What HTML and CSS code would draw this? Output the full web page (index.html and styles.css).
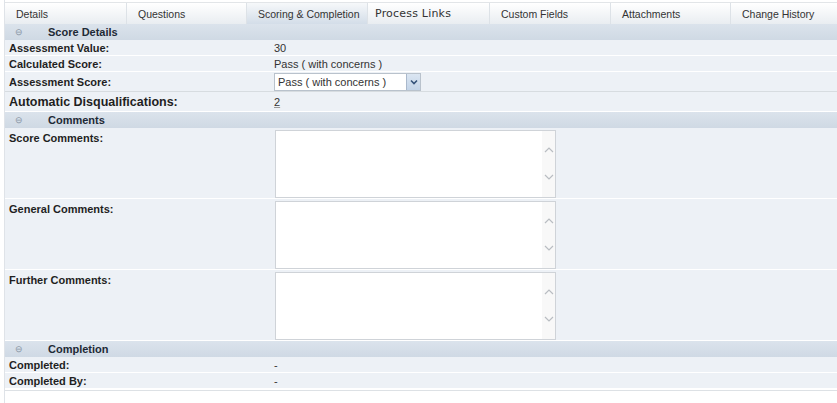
FILE: index.html
```html
<!DOCTYPE html>
<html>
<head>
<meta charset="utf-8">
<link rel="stylesheet" href="styles.css">
</head>
<body>
<div class="page">
  <div class="tabs">
    <div class="tab">Details</div>
    <div class="tab">Questions</div>
    <div class="tab active">Scoring &amp; Completion</div>
    <div class="tab big">Process Links</div>
    <div class="tab">Custom Fields</div>
    <div class="tab">Attachments</div>
    <div class="tab last">Change History</div>
  </div>

  <div class="section-head"><span class="toggle">&#8854;</span><span class="title">Score Details</span></div>
  <div class="row h16"><div class="label">Assessment Value:</div><div class="value">30</div></div>
  <div class="row h16"><div class="label">Calculated Score:</div><div class="value">Pass ( with concerns )</div></div>
  <div class="row h20 sep-gray"><div class="label">Assessment Score:</div>
    <div class="value"><div class="select"><span class="select-text">Pass ( with concerns )</span><span class="select-btn"><svg width="8" height="6" viewBox="0 0 8 6"><path d="M1 1.5 L4 4.5 L7 1.5" fill="none" stroke="#34527a" stroke-width="1.6"/></svg></span></div></div>
  </div>
  <div class="row h20"><div class="label wide">Automatic Disqualifications:</div><div class="value"><span class="link">2</span></div></div>

  <div class="section-head"><span class="toggle">&#8854;</span><span class="title">Comments</span></div>
  <div class="row ta-row"><div class="label top">Score Comments:</div><div class="value"><div class="textarea"><div class="ta-field"></div><div class="ta-scroll"><svg width="10" height="6" viewBox="0 0 10 6"><path d="M1 5 L5 1 L9 5" fill="none" stroke="#b9bdc2" stroke-width="1.2"/></svg><svg width="10" height="6" viewBox="0 0 10 6"><path d="M1 1 L5 5 L9 1" fill="none" stroke="#b9bdc2" stroke-width="1.2"/></svg></div></div></div></div>
  <div class="row ta-row"><div class="label top">General Comments:</div><div class="value"><div class="textarea"><div class="ta-field"></div><div class="ta-scroll"><svg width="10" height="6" viewBox="0 0 10 6"><path d="M1 5 L5 1 L9 5" fill="none" stroke="#b9bdc2" stroke-width="1.2"/></svg><svg width="10" height="6" viewBox="0 0 10 6"><path d="M1 1 L5 5 L9 1" fill="none" stroke="#b9bdc2" stroke-width="1.2"/></svg></div></div></div></div>
  <div class="row ta-row"><div class="label top">Further Comments:</div><div class="value"><div class="textarea"><div class="ta-field"></div><div class="ta-scroll"><svg width="10" height="6" viewBox="0 0 10 6"><path d="M1 5 L5 1 L9 5" fill="none" stroke="#b9bdc2" stroke-width="1.2"/></svg><svg width="10" height="6" viewBox="0 0 10 6"><path d="M1 1 L5 5 L9 1" fill="none" stroke="#b9bdc2" stroke-width="1.2"/></svg></div></div></div></div>

  <div class="section-head"><span class="toggle">&#8854;</span><span class="title">Completion</span></div>
  <div class="row h16"><div class="label">Completed:</div><div class="value">-</div></div>
  <div class="row h16"><div class="label">Completed By:</div><div class="value">-</div></div>
  <div class="row tail"></div>
</div>
</body>
</html>
```

FILE: styles.css
```css
html, body {
  margin: 0;
  padding: 0;
  background: #ffffff;
  height: 403px;
  overflow: hidden;
}
body {
  font-family: "Liberation Sans", Arial, sans-serif;
  font-size: 11px;
  color: #222;
}
.page {
  margin-left: 4px;
  padding-top: 2px;
  border-left: 1px solid #dfe3e8;
}
.tabs {
  display: grid;
  grid-template-columns: 122px 120px 121px 122px 121px 120px 1fr;
  height: 21px;
  border-top: 1px solid #e2e5e8;
  background: linear-gradient(#ffffff, #e9edf1);
}
.tab {
  display: flex;
  align-items: center;
  padding-left: 11px;
  font-size: 10.5px;
  color: #333;
  border-right: 1px solid #dde2e7;
}
.tab.active {
  background: linear-gradient(#f6f8fa, #d3dde8);
}
.tab.big {
  font-family: "DejaVu Sans", sans-serif;
  font-size: 11px;
  letter-spacing: 0.2px;
  padding-left: 7px;
}
.tab.last { border-right: none; }

.section-head {
  height: 16px;
  display: flex;
  align-items: center;
  background: linear-gradient(#dbe3ec, #cfd9e4);
}
.toggle {
  width: 14px;
  margin-left: 7px;
  font-size: 9px;
  color: #8a97a6;
  text-align: center;
}
.title {
  margin-left: 22px;
  font-weight: bold;
  font-size: 11px;
  color: #1e2a36;
}
.row {
  display: flex;
  align-items: center;
  background: #edf1f6;
  border-bottom: 1px solid #ffffff;
  box-sizing: border-box;
}
.row.h16 { height: 16px; }
.row.h20 { height: 20px; }
.row.sep-gray { border-bottom: 1px solid #d7dce0; }
.label {
  width: 269px;
  padding-left: 4px;
  box-sizing: border-box;
  font-weight: bold;
  color: #1f1f1f;
  flex: none;
}
.label.wide { font-size: 12.5px; }
.label.top { align-self: flex-start; padding-top: 4px; }
.value {
  color: #333;
  flex: none;
}
.link {
  text-decoration: underline;
  text-decoration-color: #999;
}
.select {
  display: flex;
  width: 147px;
  height: 18px;
  box-sizing: border-box;
  border: 1px solid #b9c2cc;
  background: #fff;
  align-items: center;
}
.select-text {
  flex: 1;
  padding-left: 3px;
}
.select-btn {
  width: 13px;
  height: 16px;
  display: flex;
  align-items: center;
  justify-content: center;
  background: linear-gradient(#dbe6f2, #c3d4e8);
  border-left: 1px solid #aab9cc;
}
.ta-row {
  height: 71px;
  align-items: flex-start;
  border-bottom: 1px solid #ffffff;
}
.ta-row .value { padding-top: 2px; padding-left: 1px; }
.textarea {
  display: flex;
  width: 281px;
  height: 68px;
  box-sizing: border-box;
  border: 1px solid #cfd3d8;
  background: #fff;
}
.ta-field { flex: 1; }
.ta-scroll {
  width: 13px;
  background: #f8f8f8;
  display: flex;
  flex-direction: column;
  align-items: center;
  justify-content: space-between;
  padding: 16px 0 17px;
}
.row.tail {
  margin-top: 1px;
  border-top: 1px solid #dde1e5;
  background: #ffffff;
  height: 16px;
}
```
